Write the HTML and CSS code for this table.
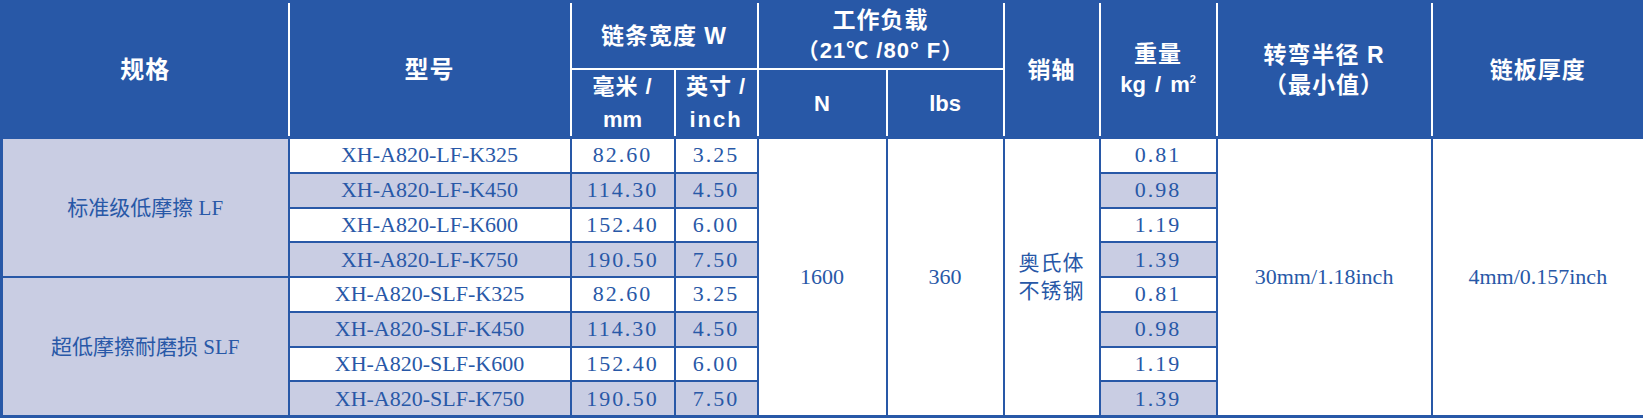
FILE: index.html
```html
<!DOCTYPE html>
<html lang="zh-CN">
<head>
<meta charset="utf-8">
<title>链条规格表</title>
<link rel="stylesheet" href="styles.css">
</head>
<body>
<table class="spec">
  <colgroup>
    <col class="c-spec">
    <col class="c-model">
    <col class="c-mm">
    <col class="c-in">
    <col class="c-n">
    <col class="c-lbs">
    <col class="c-pin">
    <col class="c-wt">
    <col class="c-rad">
    <col class="c-thk">
  </colgroup>
  <thead>
    <tr class="hr1">
      <th rowspan="2" class="to-body big">规格</th>
      <th rowspan="2" class="to-body big">型号</th>
      <th colspan="2">链条宽度 W</th>
      <th colspan="2">工作负载<br><span class="paren">（21℃ /80° F）</span></th>
      <th rowspan="2" class="to-body">销轴</th>
      <th rowspan="2" class="to-body">重量<br><span class="unit">kg / m<sup>2</sup></span></th>
      <th rowspan="2" class="to-body">转弯半径 R<br>（最小值）</th>
      <th rowspan="2" class="to-body">链板厚度</th>
    </tr>
    <tr class="hr2">
      <th class="to-body sub">毫米 /<br><span class="latin">mm</span></th>
      <th class="to-body sub">英寸 /<br><span class="latin inch">inch</span></th>
      <th class="to-body sub"><span class="latin">N</span></th>
      <th class="to-body sub"><span class="latin">lbs</span></th>
    </tr>
  </thead>
  <tbody>
    <tr>
      <td rowspan="4" class="grp">标准级低摩擦 LF</td>
      <td>XH-A820-LF-K325</td><td class="num">82.60</td><td class="num">3.25</td>
      <td rowspan="8" class="merged">1600</td>
      <td rowspan="8" class="merged">360</td>
      <td rowspan="8" class="merged cjk">奥氏体<br>不锈钢</td>
      <td class="num">0.81</td>
      <td rowspan="8" class="merged">30mm/1.18inch</td>
      <td rowspan="8" class="merged">4mm/0.157inch</td>
    </tr>
    <tr class="alt"><td>XH-A820-LF-K450</td><td class="num">114.30</td><td class="num">4.50</td><td class="num">0.98</td></tr>
    <tr><td>XH-A820-LF-K600</td><td class="num">152.40</td><td class="num">6.00</td><td class="num">1.19</td></tr>
    <tr class="alt"><td>XH-A820-LF-K750</td><td class="num">190.50</td><td class="num">7.50</td><td class="num">1.39</td></tr>
    <tr>
      <td rowspan="4" class="grp">超低摩擦耐磨损 SLF</td>
      <td>XH-A820-SLF-K325</td><td class="num">82.60</td><td class="num">3.25</td><td class="num">0.81</td>
    </tr>
    <tr class="alt"><td>XH-A820-SLF-K450</td><td class="num">114.30</td><td class="num">4.50</td><td class="num">0.98</td></tr>
    <tr><td>XH-A820-SLF-K600</td><td class="num">152.40</td><td class="num">6.00</td><td class="num">1.19</td></tr>
    <tr class="alt"><td>XH-A820-SLF-K750</td><td class="num">190.50</td><td class="num">7.50</td><td class="num">1.39</td></tr>
  </tbody>
</table>
</body>
</html>
```
FILE: styles.css
```css
html, body {
  margin: 0;
  padding: 0;
  background: #ffffff;
}

.spec {
  width: 1643px;
  table-layout: fixed;
  border-collapse: collapse;
  border: 3px solid #2858a7;
}

.c-spec { width: 287px; }
.c-model { width: 282px; }
.c-mm { width: 104px; }
.c-in { width: 83px; }
.c-n { width: 129px; }
.c-lbs { width: 117px; }
.c-pin { width: 96px; }
.c-wt { width: 117px; }
.c-rad { width: 215px; }
.c-thk { width: 213px; }

th {
  background: #2858a7;
  color: #ffffff;
  font-family: "Liberation Sans", "Noto Sans CJK SC", sans-serif;
  font-weight: 700;
  font-size: 23px;
  line-height: 30px;
  letter-spacing: 1px;
  border: 2px solid #ffffff;
  padding: 0;
  text-align: center;
  vertical-align: middle;
}

th.big { font-size: 24px; }

th.to-body {
  border-bottom: 3px solid #2858a7;
}

.hr1 th { height: 65px; }
.hr2 th { height: 64px; }

th.sub {
  font-size: 22px;
  line-height: 33px;
}

.paren { font-weight: 700; font-size: 22px; }

.unit {
  font-weight: 700;
  font-size: 22px;
  letter-spacing: 0;
  word-spacing: 3px;
}

.unit sup {
  font-size: 11px;
  vertical-align: 9px;
  line-height: 0;
}

.latin { letter-spacing: 0; }
.inch { letter-spacing: 2px; }

td {
  border: 2px solid #2858a7;
  background: #ffffff;
  color: #2858a7;
  font-family: "Liberation Serif", "Noto Sans CJK SC", serif;
  font-size: 22px;
  line-height: 28px;
  padding: 0;
  height: 32.75px;
  text-align: center;
  vertical-align: middle;
}

tbody tr.alt td { background: #c9cde3; }

td.grp {
  background: #c9cde3;
  font-size: 21px;
}

td.merged { background: #ffffff; }

td.num { letter-spacing: 2px; }

td.cjk {
  font-size: 21px;
  letter-spacing: 1px;
}
```
